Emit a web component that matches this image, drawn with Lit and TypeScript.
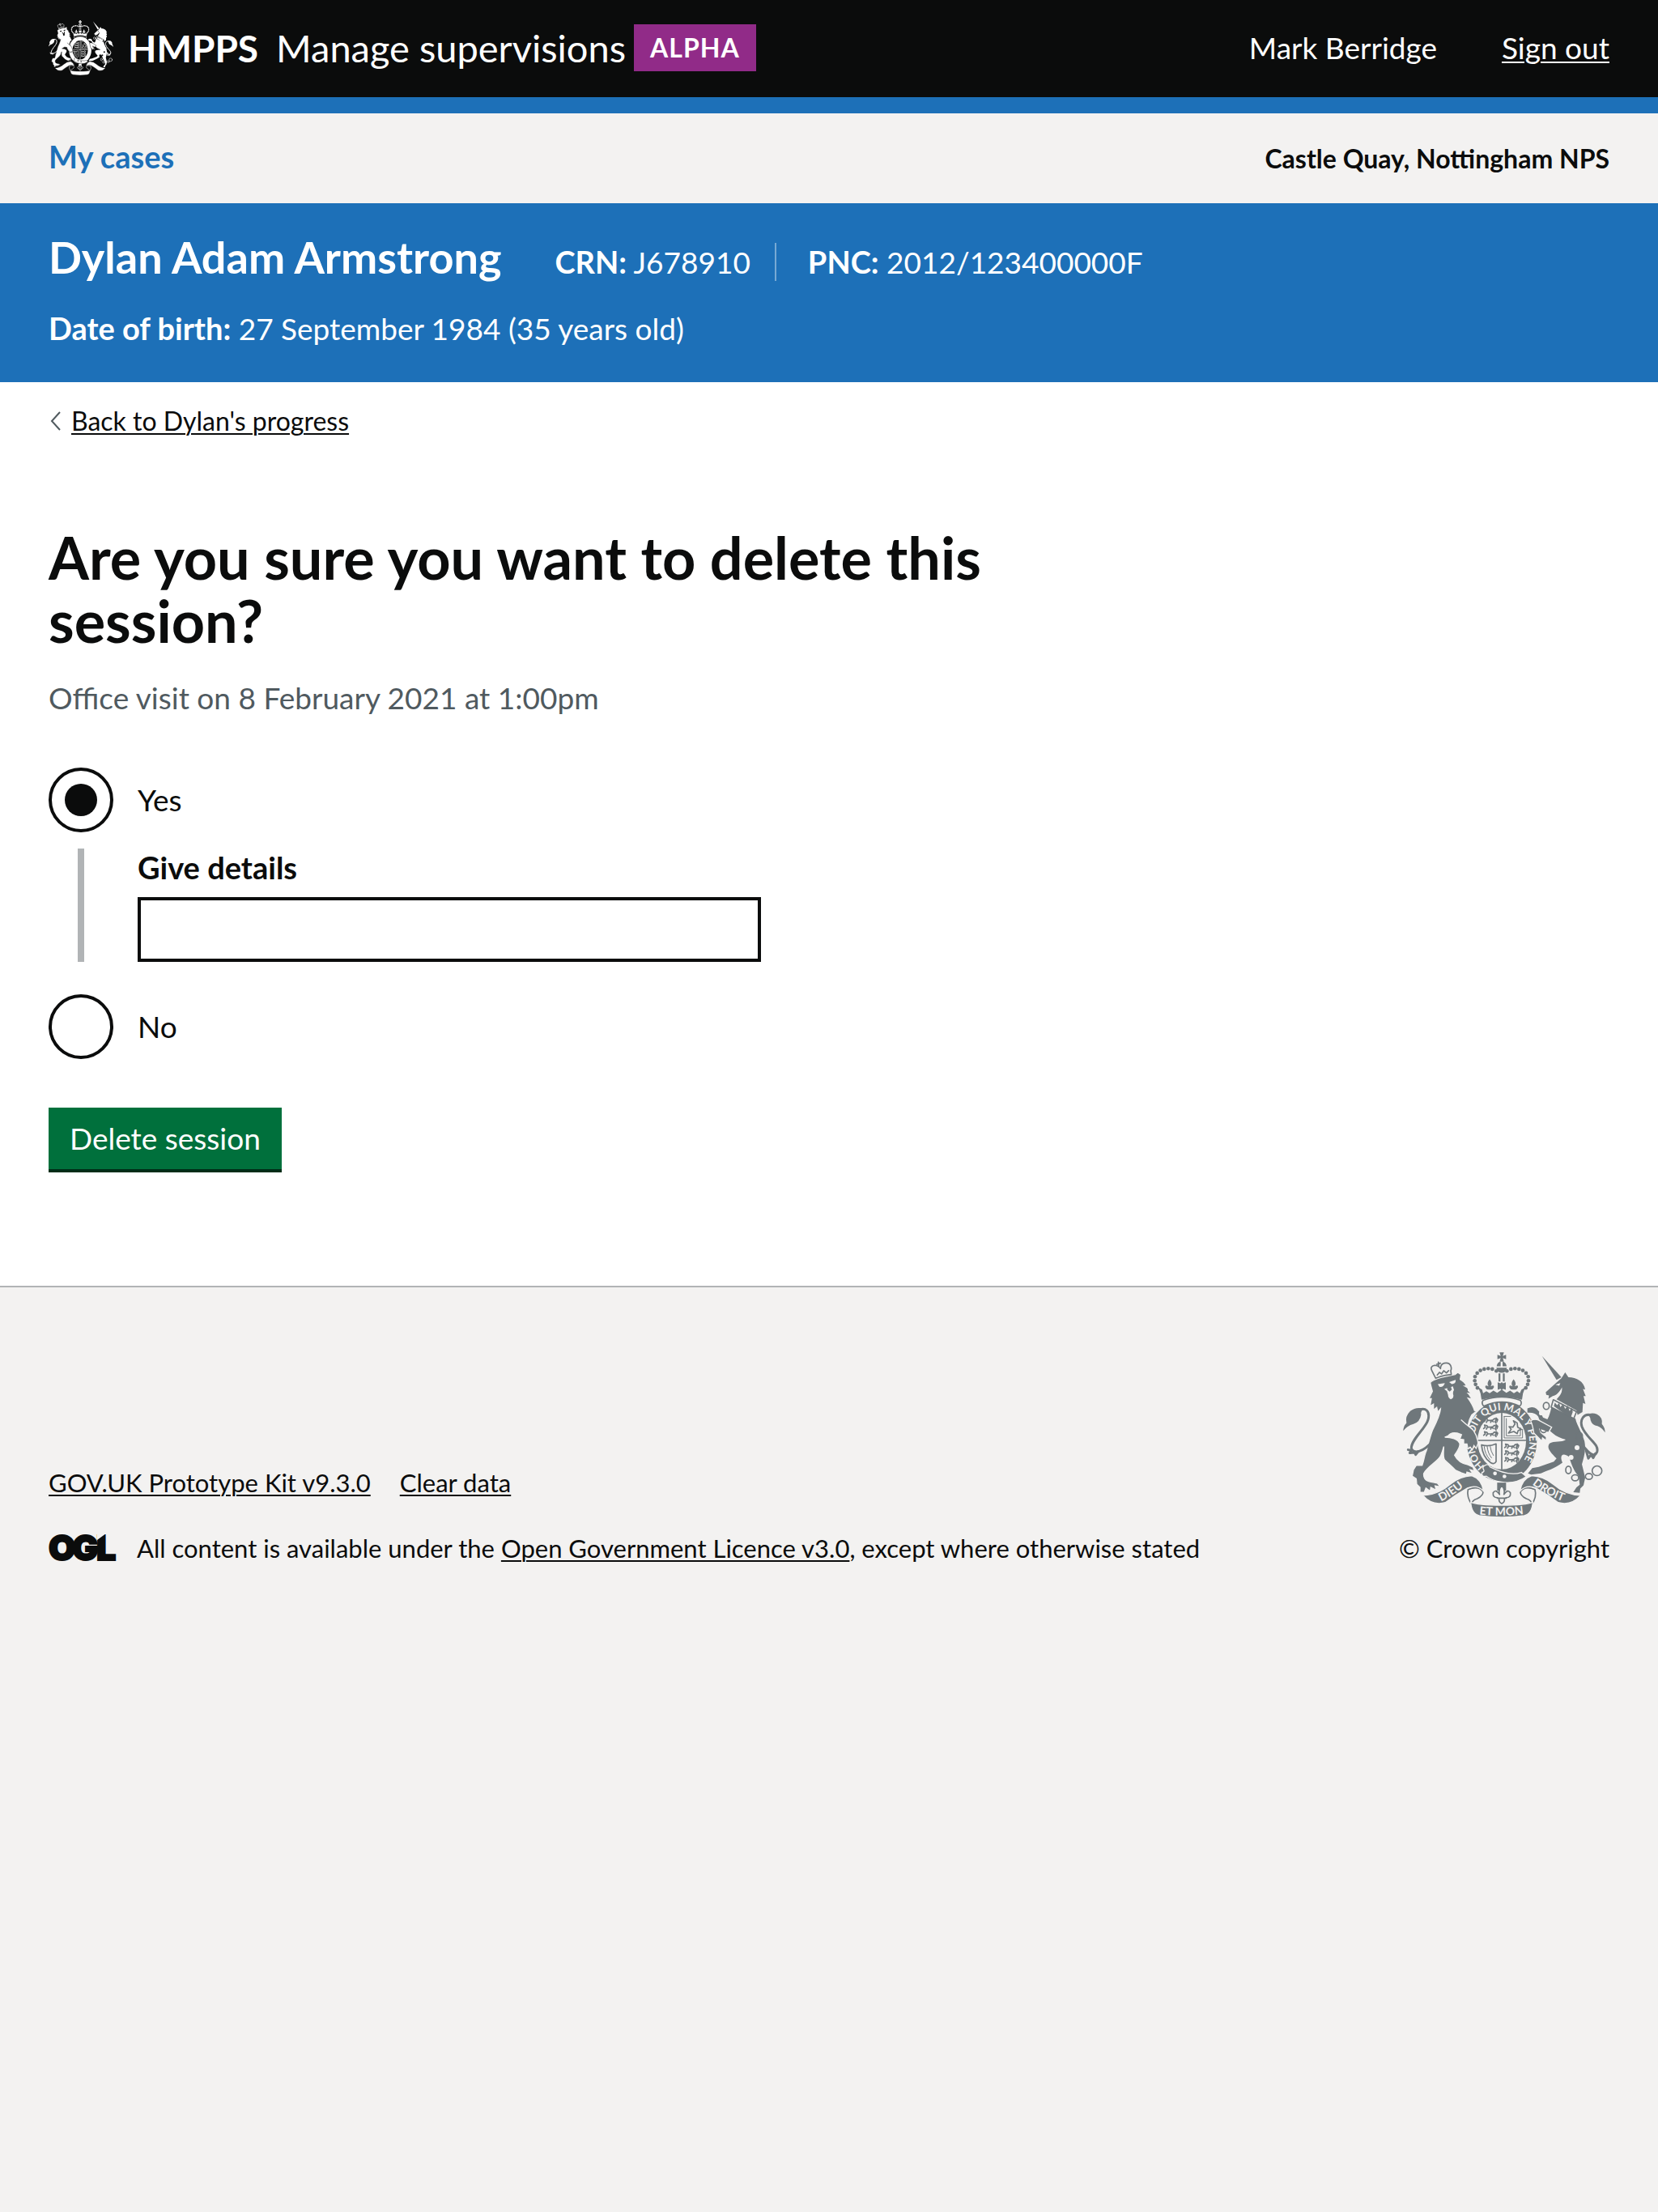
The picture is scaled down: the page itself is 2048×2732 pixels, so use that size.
import { LitElement, html, css, svg, nothing } from "lit";
import { customElement, property, state } from "lit/decorators.js";

const BEADS = [
  [367, 99], [352, 92], [337, 90], [322, 92], [308, 97],
  [296, 107], [288, 120], [287, 135], [290, 149], [297, 162],
];

/** Royal coat of arms. Set "motto" to letter the garter and the ribbons. */
@customElement("royal-arms")
export class RoyalArms extends LitElement {
  @property({ type: Boolean }) motto = false;

  static styles = css`
    :host { display: block; }
    svg { display: block; width: 100%; height: 100%; }
    .ink { fill: var(--ink); }
    .ground { fill: var(--ground); }
    .line { fill: none; stroke: var(--ink); stroke-width: 5; stroke-linejoin: round; stroke-linecap: round; }
    .thin { stroke-width: 3; }
    .tail { stroke-width: 9; }
    .cut { fill: none; stroke: var(--ground); stroke-width: 4; }
    .edge { fill: var(--ink); stroke: var(--ground); stroke-width: 4; }
    .fold { fill: var(--ground); stroke: var(--ink); stroke-width: 5; stroke-linejoin: round; }
    text { fill: var(--ground); font: bold 38px Lato, "Liberation Sans", sans-serif; }
    .large { font-size: 42px; }
  `;

  private lions(x: number, y: number) {
    return svg`<g class="line" transform="translate(${x} ${y})">
      ${[0, 25, 50].map((d) => svg`<path d="M4 ${d + 16} l6 -5 l-3 -8 l9 2 l4 6 h16 l8 -7 l7 4 l-5 8 l4 5 M14 ${d + 18} l4 -7 M30 ${d + 18} l3 -8 l7 6 M50 ${d + 2} l6 6 l-3 8"/>`)}
    </g>`;
  }

  render() {
    return html`<svg viewBox="21 29 750 614" preserveAspectRatio="none" aria-hidden="true">
      <g class="ink">
        <path d="M379 30h16l-4 13l12-4v16l-12-4l4 13h-16l4-13l-12 4v-16l12 4z"/>
        <path d="M368 82q2-16 15-18v18zM405 82q-2-16-15-18v18zM367 87h39q-2 19-19 19t-20-19z"/>
        <path d="M375 108h7v30h-7zM391 108h7v30h-7z"/>
        ${[0, 1].map((m) => BEADS.map(([x, y]) => svg`<circle cx=${m ? 773 - x : x} cy=${y} r="7"/>`))}
        <path d="M372 141l10 4l5-5l5 5l10-4v28l-10-4l-5 6l-5-6l-10 4z"/>
        <path d="M342 130q13 16 4 26q14-8 12 4q-4 10-16 8q-12 2-16-8q-2-12 12-4q-9-10 4-26zM431 130q13 16 4 26q14-8 12 4q-4 10-16 8q-12 2-16-8q-2-12 12-4q-9-10 4-26z"/>
        <path d="M300 160l14 8l4 14l12-8l12 8l14-10l14 8l17-12l17 12l14-8l14 10l12-8l10 8l6-14l14-8q-10 20-12 46q-75-22-150 0q-2-26-12-46z"/>
      </g>
      <ellipse class="ink" cx="387" cy="360" rx="130" ry="150"/>
      <path class="fold" d="M318 208q69-24 138 0q8 12-2 22q-66-32-134 0q-10-12-2-22z"/>
      <ellipse class="ground" cx="387" cy="360" rx="90" ry="105"/>
      <g class="line">
        <path d="M387 256v208M298 357h178"/>
        <path class="thin" d="M396 268v80h68v-32M396 268h24M404 276v64h52v-30"/>
        <path d="M412 330l10-14l-8-10l14 2l8-12l-6-12l14 8l2 16l14 8l-12 4l-4 12l-12-8z"/>
        <path d="M312 374q28 8 54-4v66q-6 12-20 4q-30-20-34-66z"/>
        <path class="thin" d="M322 380q2 28 22 50M333 380q2 24 16 42M344 379q2 18 12 34"/>
      </g>
      ${this.lions(316, 272)} ${this.lions(394, 368)}
      ${this.motto
        ? svg`<defs>
            <path id="garter" d="M324 453A103 116 0 1 1 453 449"/>
            <path id="left" d="M162 584Q212 560 256 520"/>
            <path id="base" d="M304 632Q387 641 474 630"/>
            <path id="right" d="M500 520Q545 558 626 588"/>
          </defs>
          <text><textPath href="#garter">HONI SOIT QUI MAL Y PENSE</textPath></text>`
        : nothing}
      <g class="edge">
        <path d="M322 452q14-12 22 4q70 36 116 20l18 16q-40 28-92 20q-36-6-56-22q-20 4-16-14q10-2 6-10q-6-8 2-14z"/>
        <path d="M122 142C130 132 150 126 175 120L214 112L224 104L236 112L233 130C243 136 252 144 256 154L250 155C262 160 264 168 263 172L276 184L262 182C270 190 272 196 277 204L262 200C272 214 282 232 286 246L294 248L276 262C268 275 264 290 262 300L282 320C294 338 298 352 299 368L292 387L284 376L278 392L270 382L262 388L258 370L246 370L246 354L232 352L238 336L222 330C205 326 196 330 188 340L176 345C200 345 225 352 231 368C234 384 222 396 212 412C222 432 240 444 262 448L280 456L286 470L270 466L280 482L258 475L256 484L238 478L216 468C200 452 186 440 176 430C168 420 172 400 172 380C168 395 165 405 160 415C150 435 110 455 98 480C96 495 104 508 118 510L148 516L160 530L140 526L144 542L124 532L122 546L106 534L100 550L84 550L84 532L72 520L70 500L55 490L60 466L70 450L92 450C100 430 100 410 108 395C115 370 122 340 130 320C145 290 158 262 160 240L150 252L146 234L134 244L134 222L121 230L126 202L117 202L130 175L124 152Z"/>
      </g>
      <g class="ground">
        <circle cx="362" cy="480" r="7"/><circle cx="397" cy="491" r="7"/>
        <path d="M150 148l26-4q-4 16-20 14zM192 140l24-8q2 14-14 16zM174 166l32-10l4 14q-6 8-2 20q0 12-10 14q-10-4-10-16l-4-14z"/>
      </g>
      <path class="ink" d="M184 160l14-4l4 12l-8 8l-8-6z"/>
      <path class="cut" d="M236 280q26 24 44 36"/>
      <g class="line">
        <path d="M142 126l-14-28q-8-16 10-20q14 0 22 12q0-16 14-20q18-4 24 10q4 10 0 18l2 14q-30 2-58 14z"/>
        <path d="M148 114l8-10l8 6l8-12l10 8l8-8M154 82l-2-16M146 74l14-4"/>
        <path class="tail" d="M74 246C106 230 122 250 114 280C106 312 52 352 52 386C58 408 94 406 138 352"/>
        <path class="tail" d="M40 392l12 2l-6 10l18-2l4 8l10-12"/>
      </g>
      <path class="ink" d="M22 322q0-18 12-30q-6-24 14-44q22-18 54-8q-16 4-14 22q-4 26-28 34q-24 6-38 26z"/>
      <g class="ink">
        <path d="M536 43L590 132L608 122z"/>
        <path d="M550 178L590 142L608 126L622 104L634 122C664 122 692 138 696 168L688 166L698 192L690 192L697 222L688 218L686 252L668 262L664 246L590 204C606 190 612 176 610 160C602 176 590 190 576 192L560 202L562 190L552 188Z"/>
        <path d="M572 230L660 276C666 304 686 330 694 362C700 396 690 424 684 446L690 470L696 496L690 524L678 536L676 552L652 550L664 532L676 522L672 490C652 470 644 440 636 418C612 400 600 414 612 440C584 462 548 472 532 480L496 484L484 480L500 460L524 456L580 436L590 424C566 400 552 384 564 368C580 358 610 366 624 354C590 346 556 322 548 290C558 280 566 260 572 230z"/>
        <path d="M482 238q20-10 34 2q18 18 24 32l20 8l-6 22q-26-8-32-34q-10-16-40-14z"/>
      </g>
      <path class="edge" d="M494 284q14-8 30-2l48 26l-12 20l-32-12l4 12l20 16v14l-14-10l-2 12l-30-30q-4-28-12-46z"/>
      <path class="fold" d="M578 206l86 44l-10 26l-84-42z"/>
      <path class="ink" d="M580 230l4-14l8 10l8-8l4 16l10-12l8 18l10-12l6 20l10-12l2 16l-8 22z"/>
      <path class="ground" d="M586 150l18-6l-4 10z"/>
      <g class="line">
        <path class="tail" d="M722 264C690 254 676 280 684 306C700 350 750 370 740 400C730 422 712 408 684 372"/>
        <path class="tail" d="M700 396l8 28l10-14l8 12l8-16"/>
        <ellipse cx="552" cy="229" rx="11" ry="13"/><ellipse cx="542" cy="314" rx="12" ry="14"/>
        <ellipse cx="674" cy="340" rx="12" ry="13"/><ellipse cx="634" cy="467" rx="10" ry="14"/>
        <ellipse cx="659" cy="496" rx="13" ry="11"/><ellipse cx="710" cy="491" rx="13" ry="11"/>
        <circle cx="740" cy="470" r="18"/>
      </g>
      <path class="ink" d="M770 328q0-18-12-32q4-24-18-36q-20-8-38 2q14 4 14 20q6 20 26 22q16 6 28 24z"/>
      <g class="ground">
        <circle cx="533" cy="256" r="8"/><circle cx="666" cy="384" r="9"/><circle cx="644" cy="420" r="9"/>
      </g>
      <path class="fold" d="M262 540Q300 524 318 548Q318 562 296 574Q276 580 276 596Q256 566 262 540zM510 540Q474 524 456 548Q456 562 478 574Q498 580 498 596Q518 566 510 540z"/>
      <g class="edge">
        <path d="M94 561Q150 560 196 520Q232 490 276 488Q312 500 320 546Q296 520 260 534Q214 560 178 588Q130 602 94 561z"/>
        <path d="M680 561Q624 560 578 520Q542 490 498 488Q462 500 454 546Q478 520 514 534Q560 560 596 588Q644 602 680 561z"/>
        <path d="M272 586Q296 598 387 598Q478 598 502 586Q500 630 470 637Q387 649 304 637Q274 630 272 586z"/>
      </g>
      ${this.motto
        ? svg`<text class="large"><textPath href="#left">DIEU</textPath></text>
          <text class="large"><textPath href="#right">DROIT</textPath></text>
          <text class="large"><textPath href="#base">ET MON</textPath></text>`
        : nothing}
      <path class="ink" d="M370 514h33v30h-33z"/>
      <path class="fold" d="M387 524q14 18 8 34q14-22 24-6q2 18-16 18l-6 4q2 12-10 18q-12-6-10-18l-6-4q-18 0-16-18q10-16 24 6q-6-16 8-34zM368 572h38"/>
    </svg>`;
  }
}

@customElement("app-root")
export class AppRoot extends LitElement {
  @state() private answer = "yes";

  static styles = css`
    :host {
      display: flex;
      flex-direction: column;
      min-height: 100vh;
      background: #f3f2f1;
      color: #0b0c0c;
      font: 37px/50px Lato, "Liberation Sans", sans-serif;
    }
    * { box-sizing: border-box; }
    a { color: inherit; text-decoration-thickness: 2px; text-underline-offset: 3px; }
    .bar { display: flex; justify-content: space-between; align-items: center; padding: 0 60px; }
    .header { min-height: 140px; padding-bottom: 2px; background: #0b0c0c; border-bottom: 20px solid #1d70b8; color: #fff; }
    .brand { display: flex; align-items: center; }
    .arms-small { --ink: #fff; --ground: #0b0c0c; width: 80px; height: 68px; margin-right: 18px; }
    .name { display: flex; align-items: baseline; gap: 22px; color: #fff; text-decoration: none; font-size: 47px; line-height: 60px; }
    .name strong { font-size: 46px; }
    .tag { margin-left: 10px; padding: 0 20px; background: #912b88; font-size: 32px; line-height: 58px; font-weight: bold; letter-spacing: 1px; }
    .account { display: flex; gap: 80px; }
    .nav { align-items: baseline; padding: 33px 60px 35px; line-height: 40px; font-weight: bold; }
    .nav a { color: #1d70b8; font-size: 38px; text-decoration: none; }
    .nav span { font-size: 32px; }
    .banner { padding: 37px 60px 41px; background: #1d70b8; color: #fff; }
    .person { display: flex; align-items: baseline; margin-bottom: 32px; line-height: 46px; }
    .person h2 { margin: 0 66px 0 0; font-size: 54px; line-height: 60px; }
    .person span + span { margin-left: 30px; padding-left: 39px; border-left: 2px solid #77a9d4; }
    .banner p { margin: 0; }
    .banner b { font-size: 38px; }
    .main { padding: 28px 60px 140px; background: #fff; }
    .back { display: flex; width: fit-content; align-items: center; gap: 12px; font-size: 32px; line-height: 40px; text-decoration: none; }
    .back span { text-decoration: underline 2px; }
    .back svg { width: 16px; height: 24px; }
    .content { max-width: 1255px; }
    h1 { margin: 109px 0 32px; font-size: 72px; line-height: 78px; }
    .hint { margin: 0 0 61px; color: #505a5f; }
    fieldset { margin: 0 0 60px; padding: 0; border: 0; }
    .option { display: flex; align-items: center; gap: 30px; }
    .radio { appearance: none; width: 80px; height: 80px; margin: 0; padding: 16px; border: 4px solid #0b0c0c; border-radius: 50%; background: #fff; }
    .radio:checked { background: #0b0c0c content-box; }
    .conditional { margin: 20px 0 40px 36px; padding-left: 66px; border-left: 8px solid #b1b4b6; }
    .conditional label { display: block; margin-bottom: 14px; font-size: 38px; line-height: 46px; font-weight: bold; }
    .text { display: block; width: 100%; max-width: 770px; height: 80px; margin: 0; padding: 10px; border: 4px solid #0b0c0c; border-radius: 0; background: #fff; font: inherit; color: inherit; }
    .button { display: block; height: 76px; margin: 0 0 4px; padding: 0 26px; border: 0; border-radius: 0; background: #00703c; box-shadow: 0 4px 0 #002d18; color: #fff; font: inherit; }
    .footer { flex: 1; display: flex; justify-content: space-between; align-items: flex-start; padding: 80px 60px; border-top: 2px solid #b1b4b6; font-size: 31px; line-height: 40px; }
    .row { display: flex; align-items: flex-end; justify-content: space-between; width: 100%; }
    .links { display: flex; gap: 36px; margin-bottom: 41px; }
    .licence { display: flex; align-items: center; gap: 27px; }
    .ogl { width: 82px; height: 36px; overflow: visible; }
    .ogl text { font: 900 43px Inter, "Liberation Sans", sans-serif; fill: #0b0c0c; stroke: #0b0c0c; stroke-width: 2px; }
    .copyright { display: flex; flex-direction: column; align-items: center; gap: 18px; text-decoration: none; }
    .arms { --ink: #6f777b; --ground: #f3f2f1; width: 250px; height: 204px; }
  `;

  render() {
    return html`
      <header class="bar header">
        <div class="brand">
          <royal-arms class="arms-small"></royal-arms>
          <a class="name" href="#"><strong>HMPPS</strong><span>Manage supervisions</span></a>
          <span class="tag">ALPHA</span>
        </div>
        <div class="account"><span>Mark Berridge</span><a href="#">Sign out</a></div>
      </header>
      <nav class="bar nav"><a href="#">My cases</a><span>Castle Quay, Nottingham NPS</span></nav>
      <section class="banner">
        <div class="person">
          <h2>Dylan Adam Armstrong</h2>
          <span><b>CRN:</b> J678910</span>
          <span><b>PNC:</b> 2012/123400000F</span>
        </div>
        <p><b>Date of birth:</b> 27 September 1984 (35 years old)</p>
      </section>
      <main class="main">
        <a class="back" href="#"><svg viewBox="0 0 16 24" fill="none" stroke="#505a5f" stroke-width="2" aria-hidden="true"><path d="M14 1L4 12L14 23"/></svg><span>Back to Dylan's progress</span></a>
        <form class="content" @submit=${(e: Event) => e.preventDefault()}>
          <h1>Are you sure you want to delete this session?</h1>
          <p class="hint" id="hint">Office visit on 8 February 2021 at 1:00pm</p>
          <fieldset aria-describedby="hint">
            <div class="option">
              <input class="radio" type="radio" id="yes" name="delete" .checked=${this.answer === "yes"} @change=${() => (this.answer = "yes")}>
              <label for="yes">Yes</label>
            </div>
            <div class="conditional">
              <label for="details">Give details</label>
              <input class="text" type="text" id="details" name="details">
            </div>
            <div class="option">
              <input class="radio" type="radio" id="no" name="delete" .checked=${this.answer === "no"} @change=${() => (this.answer = "no")}>
              <label for="no">No</label>
            </div>
          </fieldset>
          <button class="button" type="submit">Delete session</button>
        </form>
      </main>
      <footer class="footer">
        <div class="row">
          <div>
            <div class="links"><a href="#">GOV.UK Prototype Kit v9.3.0</a><a href="#">Clear data</a></div>
            <div class="licence">
              <svg class="ogl" viewBox="0 0 82 36" aria-hidden="true">
                <text x="0" y="33">O</text><text x="29" y="33">G</text><text x="59" y="33">L</text>
                <path fill="#f3f2f1" d="M60 0h11l-11 8z"/>
              </svg>
              <span>All content is available under the <a href="#">Open Government Licence v3.0</a>, except where otherwise stated</span>
            </div>
          </div>
          <a class="copyright" href="#"><royal-arms class="arms" motto></royal-arms><span>© Crown copyright</span></a>
        </div>
      </footer>
    `;
  }
}
